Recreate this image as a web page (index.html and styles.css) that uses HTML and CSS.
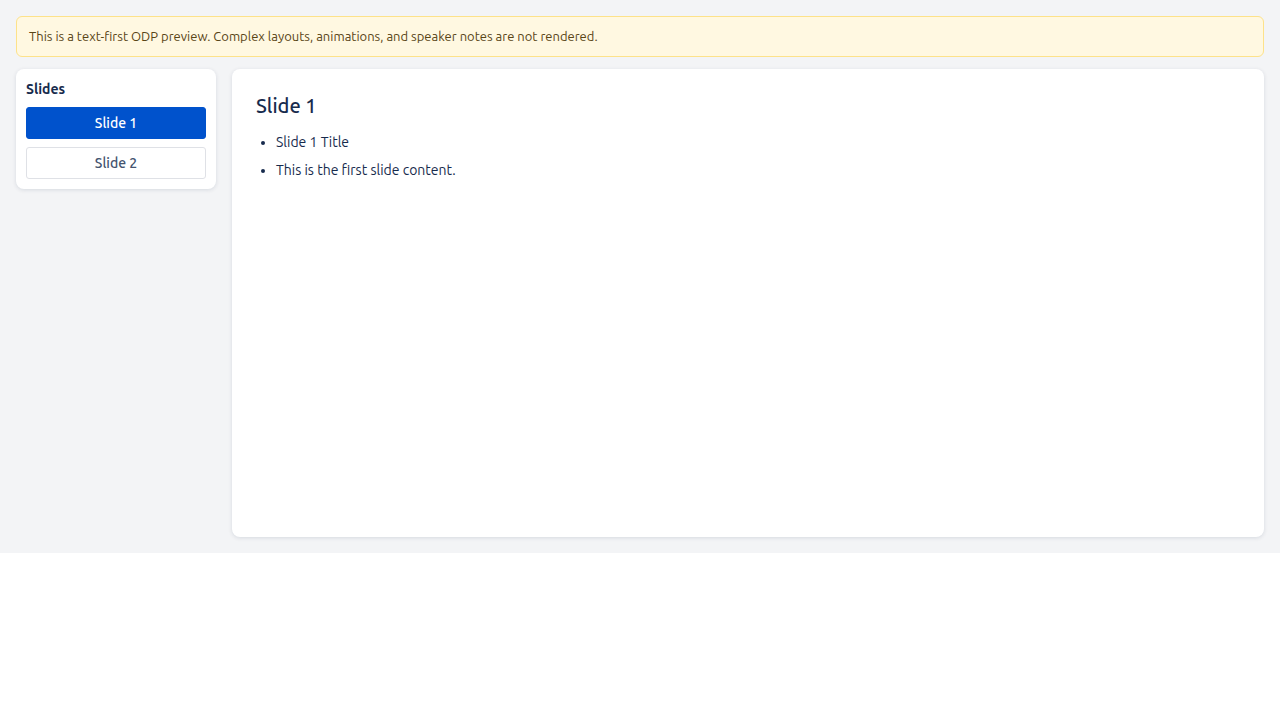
FILE: index.html
```html
<!DOCTYPE html>
<html lang="en">
<head>
  <meta charset="UTF-8">
  <meta name="viewport" content="width=device-width, initial-scale=1.0">
  <title>ODP Preview</title>
  <link rel="stylesheet" href="styles.css">
</head>
<body>
  <div class="viewer">
    <div class="notice">This is a text-first ODP preview. Complex layouts, animations, and speaker notes are not rendered.</div>

    <div class="layout">
      <aside class="sidebar">
        <h3>Slides</h3>
        <button class="slide-btn active">Slide 1</button>
        <button class="slide-btn">Slide 2</button>
      </aside>

      <main class="slide">
        <h2>Slide 1</h2>
        <ul>
          <li>Slide 1 Title</li>
          <li>This is the first slide content.</li>
        </ul>
      </main>
    </div>
  </div>
</body>
</html>
```

FILE: styles.css
```css
body {
  margin: 0;
  font-family: "Ubuntu", "Noto Sans", "Open Sans", sans-serif;
  color: #172b4d;
  background-color: #fff;
}
.viewer {
  background-color: #f3f4f6;
  padding: 16px;
}
.notice {
  background-color: #fff8e1;
  border: 1px solid #fde28a;
  border-radius: 6px;
  color: #594516;
  font-size: 13px;
  line-height: 18px;
  padding: 10px 12px 11px;
  margin-bottom: 12px;
}
.layout {
  display: flex;
  gap: 16px;
  align-items: flex-start;
}
.sidebar {
  width: 200px;
  box-sizing: border-box;
  flex-shrink: 0;
  background-color: #fff;
  border-radius: 8px;
  padding: 10px;
  box-shadow: 0 1px 4px rgba(9, 30, 66, 0.12);
  display: flex;
  flex-direction: column;
  gap: 8px;
}
.sidebar h3 {
  margin: 1px 0 1px;
  font-size: 14px;
  line-height: 18px;
  font-weight: 700;
  color: #172b4d;
}
.slide-btn {
  height: 32px;
  font-family: inherit;
  font-size: 14px;
  font-weight: 500;
  color: #44546f;
  background-color: #fff;
  border: 1px solid #dfe1e6;
  border-radius: 3px;
  cursor: pointer;
}
.slide-btn.active {
  background-color: #0052cc;
  border-color: #0052cc;
  color: #fff;
}
.slide {
  flex: 1;
  min-height: 468px;
  box-sizing: border-box;
  background-color: #fff;
  border-radius: 8px;
  padding: 25px 24px 24px;
  box-shadow: 0 1px 4px rgba(9, 30, 66, 0.12);
}
.slide h2 {
  margin: 0 0 14px;
  font-size: 20px;
  line-height: 24px;
  font-weight: 500;
}
.slide ul {
  margin: 0;
  padding-left: 20px;
  font-size: 14px;
  line-height: 20px;
}
.slide li {
  margin-bottom: 8px;
}
```
